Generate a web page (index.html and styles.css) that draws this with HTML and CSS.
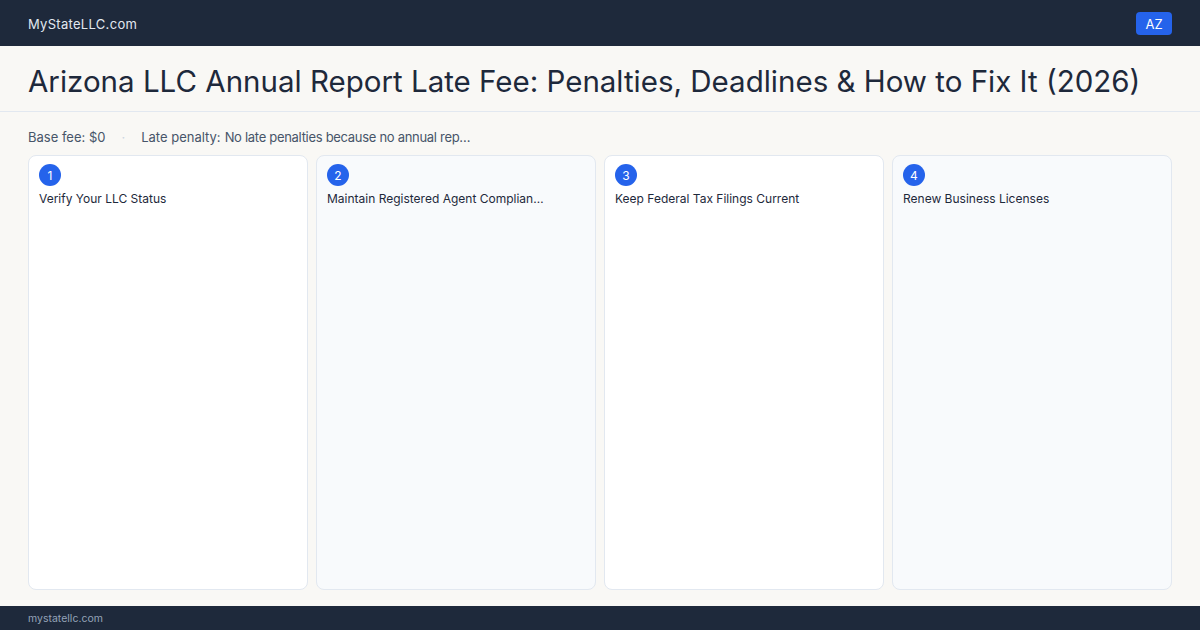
FILE: index.html
```html
<!DOCTYPE html>
<html lang="en">
<head>
    <meta charset="UTF-8">
    <meta name="viewport" content="width=device-width, initial-scale=1.0">
    <title>Arizona LLC Annual Report Late Fee</title>
    <link rel="stylesheet" href="styles.css">
</head>
<body>
    <header class="topbar">
        <span class="brand">MyStateLLC.com</span>
        <span class="state-badge">AZ</span>
    </header>

    <div class="title-bar">
        <h1>Arizona LLC Annual Report Late Fee: Penalties, Deadlines &amp; How to Fix It (2026)</h1>
    </div>

    <main class="content">
        <div class="meta">
            <span>Base fee: $0</span>
            <span class="sep">·</span>
            <span class="penalty"><span>Late penalty:</span><span class="penalty-value">No late penalties because no annual rep…</span></span>
        </div>

        <div class="steps">
            <div class="step">
                <span class="num">1</span>
                <div class="step-title">Verify Your LLC Status</div>
            </div>
            <div class="step alt">
                <span class="num">2</span>
                <div class="step-title">Maintain Registered Agent Complian…</div>
            </div>
            <div class="step">
                <span class="num">3</span>
                <div class="step-title">Keep Federal Tax Filings Current</div>
            </div>
            <div class="step alt">
                <span class="num">4</span>
                <div class="step-title">Renew Business Licenses</div>
            </div>
        </div>
    </main>

    <footer class="footer">mystatellc.com</footer>
</body>
</html>
```

FILE: styles.css
```css
* {
    box-sizing: border-box;
}

html, body {
    height: 100%;
}

body {
    margin: 0;
    font-family: Inter, "Liberation Sans", Arial, sans-serif;
    background-color: #f9f8f5;
    color: #1e293b;
    display: flex;
    flex-direction: column;
}

.topbar {
    height: 46px;
    background-color: #1e293b;
    display: flex;
    align-items: center;
    justify-content: space-between;
    padding: 1px 28px 0;
}

.brand {
    color: #e2e8f0;
    font-size: 13px;
    letter-spacing: 0.3px;
}

.state-badge {
    background-color: #2563eb;
    color: #fff;
    font-size: 13px;
    width: 36px;
    height: 23px;
    border-radius: 4px;
    display: flex;
    align-items: center;
    justify-content: center;
}

.title-bar {
    height: 66px;
    padding: 4px 28px 0;
    display: flex;
    align-items: center;
    border-bottom: 1px solid #e2e8f0;
}

h1 {
    margin: 0;
    font-size: 29.5px;
    font-weight: 400;
    color: #1e293b;
    white-space: nowrap;
}

.content {
    flex: 1;
    display: flex;
    flex-direction: column;
    padding: 16px 28px 16px;
    min-height: 0;
}

.meta {
    display: flex;
    align-items: center;
    gap: 16px;
    font-size: 13px;
    color: #475569;
    height: 18px;
    margin-bottom: 9px;
}

.sep {
    color: #cbd5e1;
}

.penalty {
    display: flex;
    gap: 4px;
}

.penalty-value {
    letter-spacing: -0.3px;
}

.steps {
    flex: 1;
    display: grid;
    grid-template-columns: repeat(4, 1fr);
    gap: 8px;
}

.step {
    background-color: #fff;
    border: 1px solid #e2e8f0;
    border-radius: 8px;
    padding: 8px 10px;
}

.step.alt {
    background-color: #f8fafc;
}

.num {
    width: 22px;
    height: 22px;
    border-radius: 50%;
    background-color: #2563eb;
    color: #fff;
    font-size: 12px;
    display: flex;
    align-items: center;
    justify-content: center;
}

.step-title {
    margin-top: 5px;
    font-size: 12px;
    color: #1e293b;
}

.footer {
    height: 24px;
    background-color: #1e293b;
    color: #94a3b8;
    font-size: 10.5px;
    padding: 0 28px;
    display: flex;
    align-items: center;
}
```
